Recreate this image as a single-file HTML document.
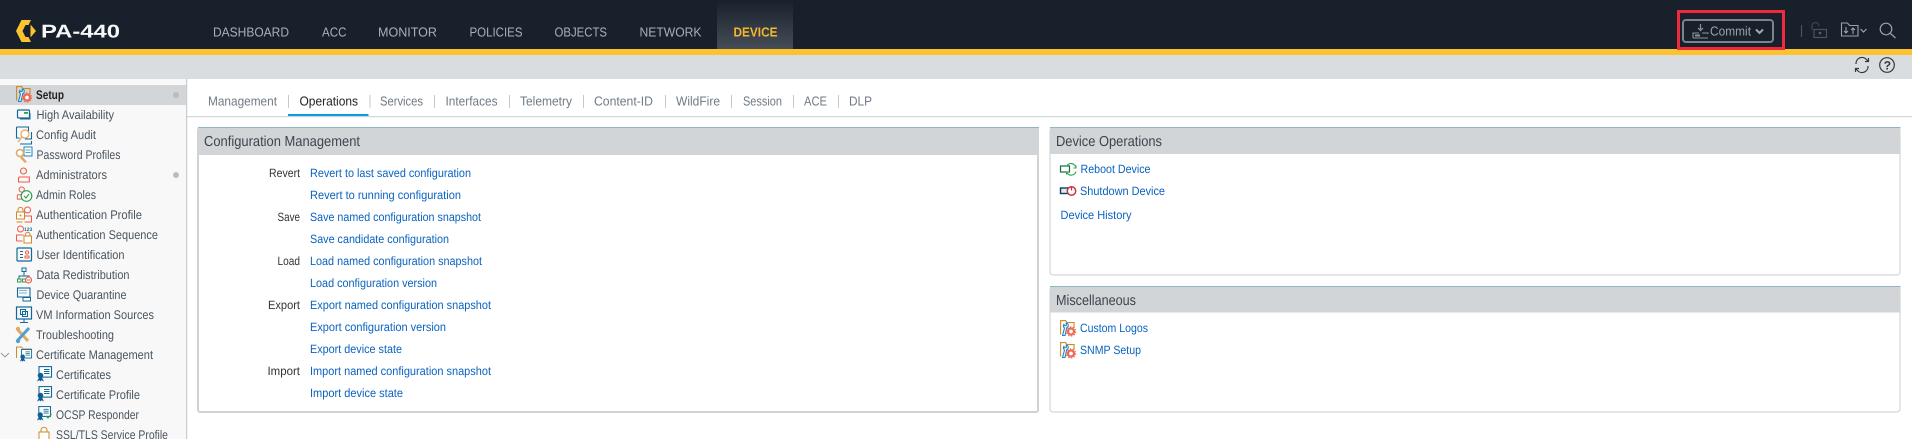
<!DOCTYPE html>
<html><head><meta charset="utf-8"><title>PA-440</title>
<style>
html,body{margin:0;padding:0;width:1912px;height:439px;overflow:hidden;background:#fff}
svg{display:block}
text{font-family:"Liberation Sans",sans-serif;font-size:12.5px;fill:#4a545e;transform:translateY(-.5px)}
.n{font-size:13px;fill:#a7b0b9}
.t{font-size:13px;fill:#6f7a84;transform:translateY(-1px)}
.l{font-size:12px;fill:#0a63c0}
.k{font-size:12px;fill:#333;text-anchor:start}
.h{font-size:14.5px;fill:#3c444c;transform:none}
</style></head><body>
<svg width="1912" height="439" viewBox="0 0 1912 439" xmlns="http://www.w3.org/2000/svg" text-rendering="geometricPrecision">
<defs>
<linearGradient id="g" x1="0" y1="0" x2="0" y2="1"><stop offset="0" stop-color="#18202b"/><stop offset="1" stop-color="#464d57"/></linearGradient>
<symbol id="setup" viewBox="0 0 16 16" overflow="visible">
<path d="M.6 14.500V.6h5l1.500 2h7v5.500" fill="none" stroke="#cf8a26" stroke-width="1.100"/>
<path d="M2.500 15.500 4.500 8c-1.100-1-1.300-2.400-.7-3.500l1.200 1.400 1.300-.5-.1-2.300c1.500 0 2.500 1.700 1.900 3.200-.3.600-.8 1-1.300 1.200L5 15.500z" fill="#fff" stroke="#1b86c4" stroke-width="1.100"/>
<circle cx="11" cy="11.500" r="3" fill="#fff" stroke="#ef6a56" stroke-width="2.300"/>
<circle cx="11" cy="11.500" r="4.600" fill="none" stroke="#ef6a56" stroke-width="1.100" stroke-dasharray="1.500 1.400"/>
</symbol>
<symbol id="cert" viewBox="0 0 16 16" overflow="visible">
<rect x="3" y=".6" width="12.500" height="10.500" fill="#fff" stroke="#0f6a99" stroke-width="1.100"/>
<path d="M8 3.500h5.500M8 5.500h5.500M8 7.500h5.500" stroke="#0f6a99" stroke-width="1"/>
<circle cx="4.500" cy="9.500" r="2.800" fill="#0f5f96"/><path d="M1 15.500l2-4h3l2 4-2.500-1.200-1 1.200-1-1.200z" fill="#0f5f96"/>
</symbol>
<symbol id="person" viewBox="0 0 16 16" overflow="visible">
<circle cx="6.500" cy="4" r="3" fill="none" stroke="#ef5b45" stroke-width="1.100"/>
<path d="M1.500 15v-3.800c0-.8.500-1.200 1.200-1.200h9.600v5z" fill="none" stroke="#ef5b45" stroke-width="1.100"/>
</symbol>
</defs>

<!-- header -->
<rect width="1912" height="49" fill="#18202b"/>
<rect y="49" width="1912" height="6" fill="#fdc22f"/>
<rect y="55" width="1912" height="24" fill="#dadde0"/>
<rect x="717" width="76" height="49" fill="url(#g)"/>
<path d="M16 31 21.500 20H31L28.500 25H25.500L22.500 31 25.500 37H28.500L31 42H21.500Z" fill="#fdc22f"/>
<path d="M30.500 24.500 36 31 30.500 37.500Z" fill="#fdc22f"/>
<text x="41" y="38" style="font-size:18.500px;font-weight:700;fill:#f6f7f8" textLength="79" lengthAdjust="spacingAndGlyphs">PA-440</text>
<text class="n" x="213" y="37" textLength="76" lengthAdjust="spacingAndGlyphs">DASHBOARD</text>
<text class="n" x="322" y="37" textLength="24.500" lengthAdjust="spacingAndGlyphs">ACC</text>
<text class="n" x="378" y="37" textLength="59" lengthAdjust="spacingAndGlyphs">MONITOR</text>
<text class="n" x="469.500" y="37" textLength="53" lengthAdjust="spacingAndGlyphs">POLICIES</text>
<text class="n" x="554.500" y="37" textLength="52.500" lengthAdjust="spacingAndGlyphs">OBJECTS</text>
<text class="n" x="639.500" y="37" textLength="62" lengthAdjust="spacingAndGlyphs">NETWORK</text>
<text class="n" x="733.500" y="37" style="fill:#f4b82e;font-weight:700" textLength="44" lengthAdjust="spacingAndGlyphs">DEVICE</text>

<!-- commit -->
<rect x="1678.500" y="11.500" width="105" height="37" fill="none" stroke="#f02a3e" stroke-width="3"/>
<rect x="1683" y="20" width="90" height="22" rx="3" fill="none" stroke="#7b838c" stroke-width="2"/>
<path d="M1700.500 24v6M1698 28l2.500 2.500 2.500-2.500" fill="none" stroke="#8c949c" stroke-width="1.200"/>
<path d="M1693 38v-5h6M1702 33h6v1M1693 38h15" fill="none" stroke="#8c949c" stroke-width="1.100"/>
<rect x="1695" y="34.500" width="5" height="2" fill="#8c949c"/>
<text x="1710" y="36" style="font-size:13px;fill:#9aa2aa" textLength="41" lengthAdjust="spacingAndGlyphs">Commit</text>
<path d="M1756 29.500l3.500 3.500 3.500-3.500" fill="none" stroke="#a2a9b0" stroke-width="2"/>
<path d="M1801.500 25v12" stroke="#4b535d" stroke-width="1.200"/>
<path d="M1812 30v-4c0-4.500 7-4.500 7 0" fill="none" stroke="#3f4852" stroke-width="1.200"/>
<rect x="1814" y="29.500" width="12.500" height="8" fill="none" stroke="#4b535d" stroke-width="1.200"/>
<circle cx="1820" cy="33" r="1.300" fill="#5a626c"/>
<path d="M1841.500 36V23h6l2 2.500h8.500V36z" fill="none" stroke="#9aa2aa" stroke-width="1.100"/>
<path d="M1846 27v6M1844 31l2 2 2-2M1853 34v-6M1851 30l2-2 2 2" fill="none" stroke="#9aa2aa" stroke-width="1.100"/>
<path d="M1860.500 29l3 3 3-3" fill="none" stroke="#9aa2aa" stroke-width="1.200"/>
<circle cx="1886" cy="29" r="5.800" fill="none" stroke="#9aa2aa" stroke-width="1.200"/>
<path d="M1890.500 33.500l5 4.500" stroke="#9aa2aa" stroke-width="1.200"/>

<!-- gray bar icons -->
<path d="M1856 64a6 6 0 0 1 10.500-4.500l1.500 1.500M1868.500 58v3.500H1865M1868 66a6 6 0 0 1-10.500 4.500L1856 69M1855.500 72v-3.500H1859" fill="none" stroke="#33393f" stroke-width="1.200"/>
<circle cx="1887" cy="65" r="7.300" fill="none" stroke="#33393f" stroke-width="1.200"/>
<text x="1883.700" y="70" style="font-size:12px;font-weight:700;fill:#33393f">?</text>

<!-- sidebar -->
<rect y="79" width="186" height="360" fill="#f8f8f8"/>
<rect x="186" y="79" width="1.200" height="360" fill="#c9cdd0"/>
<rect y="85" width="186" height="20" fill="#d3d6d9"/>
<circle cx="176" cy="95" r="3" fill="#b9bcbf"/>
<circle cx="176" cy="175" r="3" fill="#b9bcbf"/>
<path d="M1 353l4 4 4-4" fill="none" stroke="#8c949c" stroke-width=".9"/>

<use href="#setup" x="16" y="86" width="16" height="16"/>
<!-- HA -->
<rect x="17.500" y="110" width="12" height="8" rx="1" fill="none" stroke="#0f6a99" stroke-width="1.200"/><path d="M30 113v6H20" fill="none" stroke="#0f6a99"/><rect x="24" y="112" width="4" height="1.800" fill="#2ca24a"/>
<!-- Config Audit -->
<path d="M16.500 127h12v5M16.500 127v11h3" fill="none" stroke="#0f6a99" stroke-width="1.100"/><path d="M25 139h6.500v-7M20 144h11.500v-3" fill="none" stroke="#0f6a99" stroke-width="1.100"/><circle cx="25" cy="134" r="4" fill="#fff" stroke="#e9a55a" stroke-width="1.200"/><path d="M22 137l-4 5" stroke="#e9a55a" stroke-width="1.300"/>
<!-- Password -->
<rect x="24" y="147" width="8" height="9" fill="#fff" stroke="#1b86c4"/><path d="M25.500 150h5M25.500 152.500h5" stroke="#1b86c4" stroke-width=".8"/><circle cx="20" cy="153" r="3.500" fill="#fff" stroke="#e3a865" stroke-width="1.600"/><path d="M22 156l5 6-2 1-5-5" fill="#e3a865"/>
<use href="#person" x="17" y="167" width="16" height="16"/>
<!-- Admin roles -->
<use href="#person" x="16" y="186" width="14" height="14"/><circle cx="26.500" cy="196" r="5.300" fill="#fff" stroke="#2ca24a" stroke-width="1.200"/><path d="M24 196l2 2 3-4" fill="none" stroke="#2ca24a" stroke-width="1.100"/>
<!-- Auth profile -->
<rect x="16.500" y="212" width="8" height="7" fill="#fff" stroke="#cf8a26"/><path d="M18 212v-2c0-3.500 5-3.500 5 0v2" fill="none" stroke="#cf8a26"/><circle cx="20.500" cy="215.500" r="1" fill="#cf8a26"/>
<circle cx="27.500" cy="210" r="3" fill="none" stroke="#ef5b45"/><path d="M24.500 222h7v-6h-7" fill="none" stroke="#ef5b45"/><path d="M16.500 222h6" stroke="#cf8a26"/>
<!-- Auth seq -->
<circle cx="20.500" cy="229" r="3" fill="none" stroke="#ef5b45"/><path d="M16.500 241v-6h7M16.500 241h6" fill="none" stroke="#ef5b45"/><rect x="24" y="236" width="7.500" height="7" fill="#fff" stroke="#cf8a26"/><path d="M25.500 236v-1.500c0-3 4.500-3 4.500 0v1.500" fill="none" stroke="#cf8a26"/>
<text x="24" y="231.500" style="font-size:5px;font-weight:700;fill:#0f6a99">123</text>
<!-- user id -->
<rect x="17" y="248" width="14.500" height="13" rx="1" fill="none" stroke="#0f6a99" stroke-width="1.200"/><path d="M20 251.500h3M20 254.500h3M20 257.500h3" stroke="#0f6a99"/><circle cx="27" cy="252.500" r="1.600" fill="none" stroke="#ef5b45"/><path d="M25 258v-2h4v2z" fill="none" stroke="#ef5b45"/>
<!-- data redis -->
<rect x="22" y="268" width="4" height="3.500" fill="none" stroke="#0f6a99"/><path d="M24 272v4M19 279v-3h10v2" fill="none" stroke="#0f6a99"/><rect x="17.500" y="279" width="3.500" height="3" fill="none" stroke="#2ca24a"/><rect x="22.500" y="279" width="3.500" height="3" fill="none" stroke="#2ca24a"/><circle cx="28.500" cy="280" r="3" fill="#fff" stroke="#ef5b45" stroke-width="1.100"/><path d="M26.700 280h3.600" stroke="#ef5b45"/>
<!-- quarantine -->
<rect x="17.500" y="288" width="12.500" height="9" fill="none" stroke="#0f6a99" stroke-width="1.100"/><path d="M19.500 290.500h8M19.500 293h8" stroke="#0f6a99" stroke-dasharray="1 1"/><rect x="23" y="297.500" width="7.500" height="3.500" fill="#fff" stroke="#0f6a99"/>
<!-- VM -->
<rect x="16.500" y="307" width="15" height="12" fill="none" stroke="#0f6a99" stroke-width="1.200"/><path d="M24 319v3M20 322.500h8" stroke="#0f6a99"/><rect x="20.500" y="309.500" width="5" height="5" fill="none" stroke="#0f6a99"/><rect x="22.500" y="311.500" width="5" height="5" fill="none" stroke="#0f6a99"/>
<!-- trouble -->
<path d="M18 330l10 11" stroke="#e3a865" stroke-width="3"/><path d="M29 328l-11 12" stroke="#4f9fd0" stroke-width="3"/><circle cx="18" cy="329" r="2.200" fill="#e3a865"/><circle cx="18" cy="341" r="2.200" fill="#4f9fd0"/>
<!-- cert mgmt -->
<path d="M16.500 358v-11h5l1.500 2h8v4" fill="none" stroke="#cf8a26"/><use href="#cert" x="19" y="349" width="13" height="13"/>
<use href="#cert" x="36" y="366" width="16" height="16"/>
<use href="#cert" x="36" y="386" width="16" height="16"/>
<use href="#cert" x="36" y="406" width="15" height="15"/><path d="M46 416l2 2 3.500-4" fill="none" stroke="#2ca24a" stroke-width="1.100"/>
<rect x="39" y="432" width="10" height="8" fill="#fff" stroke="#cf8a26"/><path d="M41 432v-2c0-3.500 6-3.500 6 0v2" fill="none" stroke="#cf8a26"/>

<text x="36" y="99.500" style="font-weight:700;fill:#222" textLength="28" lengthAdjust="spacingAndGlyphs">Setup</text>
<text x="36.500" y="119.500" textLength="77.500" lengthAdjust="spacingAndGlyphs">High Availability</text>
<text x="36" y="139.500" textLength="60" lengthAdjust="spacingAndGlyphs">Config Audit</text>
<text x="36.500" y="159.500" textLength="84" lengthAdjust="spacingAndGlyphs">Password Profiles</text>
<text x="36" y="179.500" textLength="71" lengthAdjust="spacingAndGlyphs">Administrators</text>
<text x="36" y="199.500" textLength="60" lengthAdjust="spacingAndGlyphs">Admin Roles</text>
<text x="36" y="219.500" textLength="106" lengthAdjust="spacingAndGlyphs">Authentication Profile</text>
<text x="36" y="239.500" textLength="122" lengthAdjust="spacingAndGlyphs">Authentication Sequence</text>
<text x="36.500" y="259.500" textLength="88" lengthAdjust="spacingAndGlyphs">User Identification</text>
<text x="36.500" y="279.500" textLength="93" lengthAdjust="spacingAndGlyphs">Data Redistribution</text>
<text x="36.500" y="299.500" textLength="90" lengthAdjust="spacingAndGlyphs">Device Quarantine</text>
<text x="36" y="319.500" textLength="118" lengthAdjust="spacingAndGlyphs">VM Information Sources</text>
<text x="36" y="339.500" textLength="78" lengthAdjust="spacingAndGlyphs">Troubleshooting</text>
<text x="36" y="359.500" textLength="117" lengthAdjust="spacingAndGlyphs">Certificate Management</text>
<text x="56" y="379.500" textLength="55" lengthAdjust="spacingAndGlyphs">Certificates</text>
<text x="56" y="399.500" textLength="84" lengthAdjust="spacingAndGlyphs">Certificate Profile</text>
<text x="56" y="419.500" textLength="83" lengthAdjust="spacingAndGlyphs">OCSP Responder</text>
<text x="56" y="439.500" textLength="112" lengthAdjust="spacingAndGlyphs">SSL/TLS Service Profile</text>

<!-- tabs -->
<rect x="187" y="116" width="1725" height="1.200" fill="#d3d6d9"/>
<rect x="288" y="114" width="80.500" height="2" fill="#0a9ee0"/>
<g fill="#c4c8cc">
<rect x="288" y="95" width="1" height="13"/><rect x="369.500" y="95" width="1" height="13"/><rect x="434" y="95" width="1" height="13"/><rect x="509" y="95" width="1" height="13"/><rect x="583" y="95" width="1" height="13"/><rect x="665" y="95" width="1" height="13"/><rect x="731" y="95" width="1" height="13"/><rect x="793" y="95" width="1" height="13"/><rect x="838" y="95" width="1" height="13"/>
</g>
<text class="t" x="208" y="106.500" textLength="69" lengthAdjust="spacingAndGlyphs">Management</text>
<text class="t" x="299.500" y="106.500" style="fill:#222" textLength="58.500" lengthAdjust="spacingAndGlyphs">Operations</text>
<text class="t" x="380" y="106.500" textLength="43" lengthAdjust="spacingAndGlyphs">Services</text>
<text class="t" x="445.500" y="106.500" textLength="52" lengthAdjust="spacingAndGlyphs">Interfaces</text>
<text class="t" x="520" y="106.500" textLength="52" lengthAdjust="spacingAndGlyphs">Telemetry</text>
<text class="t" x="594" y="106.500" textLength="59" lengthAdjust="spacingAndGlyphs">Content-ID</text>
<text class="t" x="676" y="106.500" textLength="44" lengthAdjust="spacingAndGlyphs">WildFire</text>
<text class="t" x="743" y="106.500" textLength="39" lengthAdjust="spacingAndGlyphs">Session</text>
<text class="t" x="804" y="106.500" textLength="23" lengthAdjust="spacingAndGlyphs">ACE</text>
<text class="t" x="849" y="106.500" textLength="23" lengthAdjust="spacingAndGlyphs">DLP</text>

<!-- config panel -->
<rect x="198" y="128" width="840" height="284" rx="2" fill="#fff" stroke="#d0d2d4" stroke-width="2"/>
<rect x="198" y="127.500" width="841" height="27.500" fill="#d2d5d8"/>
<rect x="198" y="127" width="841" height="1" fill="#8fb6c6"/>
<text class="h" x="204" y="146" textLength="156" lengthAdjust="spacingAndGlyphs">Configuration Management</text>
<text class="k" x="269" y="177.500" textLength="31" lengthAdjust="spacingAndGlyphs">Revert</text>
<text class="k" x="277.500" y="221.500" textLength="22.500" lengthAdjust="spacingAndGlyphs">Save</text>
<text class="k" x="277.500" y="265.500" textLength="22.500" lengthAdjust="spacingAndGlyphs">Load</text>
<text class="k" x="268" y="309.500" textLength="32" lengthAdjust="spacingAndGlyphs">Export</text>
<text class="k" x="267.500" y="375.500" textLength="32.500" lengthAdjust="spacingAndGlyphs">Import</text>
<text class="l" x="310" y="177.500" textLength="161" lengthAdjust="spacingAndGlyphs">Revert to last saved configuration</text>
<text class="l" x="310" y="199.500" textLength="151" lengthAdjust="spacingAndGlyphs">Revert to running configuration</text>
<text class="l" x="310" y="221.500" textLength="171" lengthAdjust="spacingAndGlyphs">Save named configuration snapshot</text>
<text class="l" x="310" y="243.500" textLength="139" lengthAdjust="spacingAndGlyphs">Save candidate configuration</text>
<text class="l" x="310" y="265.500" textLength="172" lengthAdjust="spacingAndGlyphs">Load named configuration snapshot</text>
<text class="l" x="310" y="287.500" textLength="127" lengthAdjust="spacingAndGlyphs">Load configuration version</text>
<text class="l" x="310" y="309.500" textLength="181" lengthAdjust="spacingAndGlyphs">Export named configuration snapshot</text>
<text class="l" x="310" y="331.500" textLength="136" lengthAdjust="spacingAndGlyphs">Export configuration version</text>
<text class="l" x="310" y="353.500" textLength="92" lengthAdjust="spacingAndGlyphs">Export device state</text>
<text class="l" x="310" y="375.500" textLength="181" lengthAdjust="spacingAndGlyphs">Import named configuration snapshot</text>
<text class="l" x="310" y="397.500" textLength="93" lengthAdjust="spacingAndGlyphs">Import device state</text>

<!-- device ops -->
<rect x="1050" y="128" width="850" height="147" rx="3" fill="#fff" stroke="#d4d6d8" stroke-width="1.200"/>
<rect x="1050" y="127.500" width="850.500" height="26.500" fill="#d2d5d8"/>
<rect x="1050" y="127" width="850.500" height="1" fill="#8fb6c6"/>
<text class="h" x="1056" y="146" textLength="106" lengthAdjust="spacingAndGlyphs">Device Operations</text>
<rect x="1060.500" y="166" width="9" height="6" fill="none" stroke="#14694a" stroke-width="1.200"/>
<path d="M1066.500 166.500a5 5 0 0 1 8.500-1l1 1.500M1076 165.500v2.500h-2.500M1076 171.500a5 5 0 0 1-8.500 2l-1-1.500M1066.500 174.500v-2.500h2.500" fill="none" stroke="#2ca24a" stroke-width="1.100"/>
<text class="l" x="1080.500" y="173.500" textLength="70" lengthAdjust="spacingAndGlyphs">Reboot Device</text>
<rect x="1060.500" y="188" width="10" height="5.500" fill="#dfe9f0" stroke="#0f3f60" stroke-width="1.400"/>
<circle cx="1071.500" cy="191" r="4.200" fill="#fff" stroke="#c9313b" stroke-width="1.500"/><path d="M1071.500 187.500v3" stroke="#c9313b" stroke-width="1.200"/>
<text class="l" x="1080" y="195.500" textLength="85" lengthAdjust="spacingAndGlyphs">Shutdown Device</text>
<text class="l" x="1060.500" y="219.500" textLength="71" lengthAdjust="spacingAndGlyphs">Device History</text>

<!-- misc -->
<rect x="1050" y="287" width="850" height="125" rx="3" fill="#fff" stroke="#d4d6d8" stroke-width="1.200"/>
<rect x="1050" y="286" width="850.500" height="26.500" fill="#d2d5d8"/>
<rect x="1050" y="286" width="850.500" height="1" fill="#8fb6c6"/>
<text class="h" x="1056" y="305" textLength="80" lengthAdjust="spacingAndGlyphs">Miscellaneous</text>
<use href="#setup" x="1060" y="320" width="16" height="16"/>
<use href="#setup" x="1060" y="342" width="16" height="16"/>
<text class="l" x="1080" y="332.500" textLength="68" lengthAdjust="spacingAndGlyphs">Custom Logos</text>
<text class="l" x="1080" y="354.500" textLength="61" lengthAdjust="spacingAndGlyphs">SNMP Setup</text>
</svg>
</body></html>
